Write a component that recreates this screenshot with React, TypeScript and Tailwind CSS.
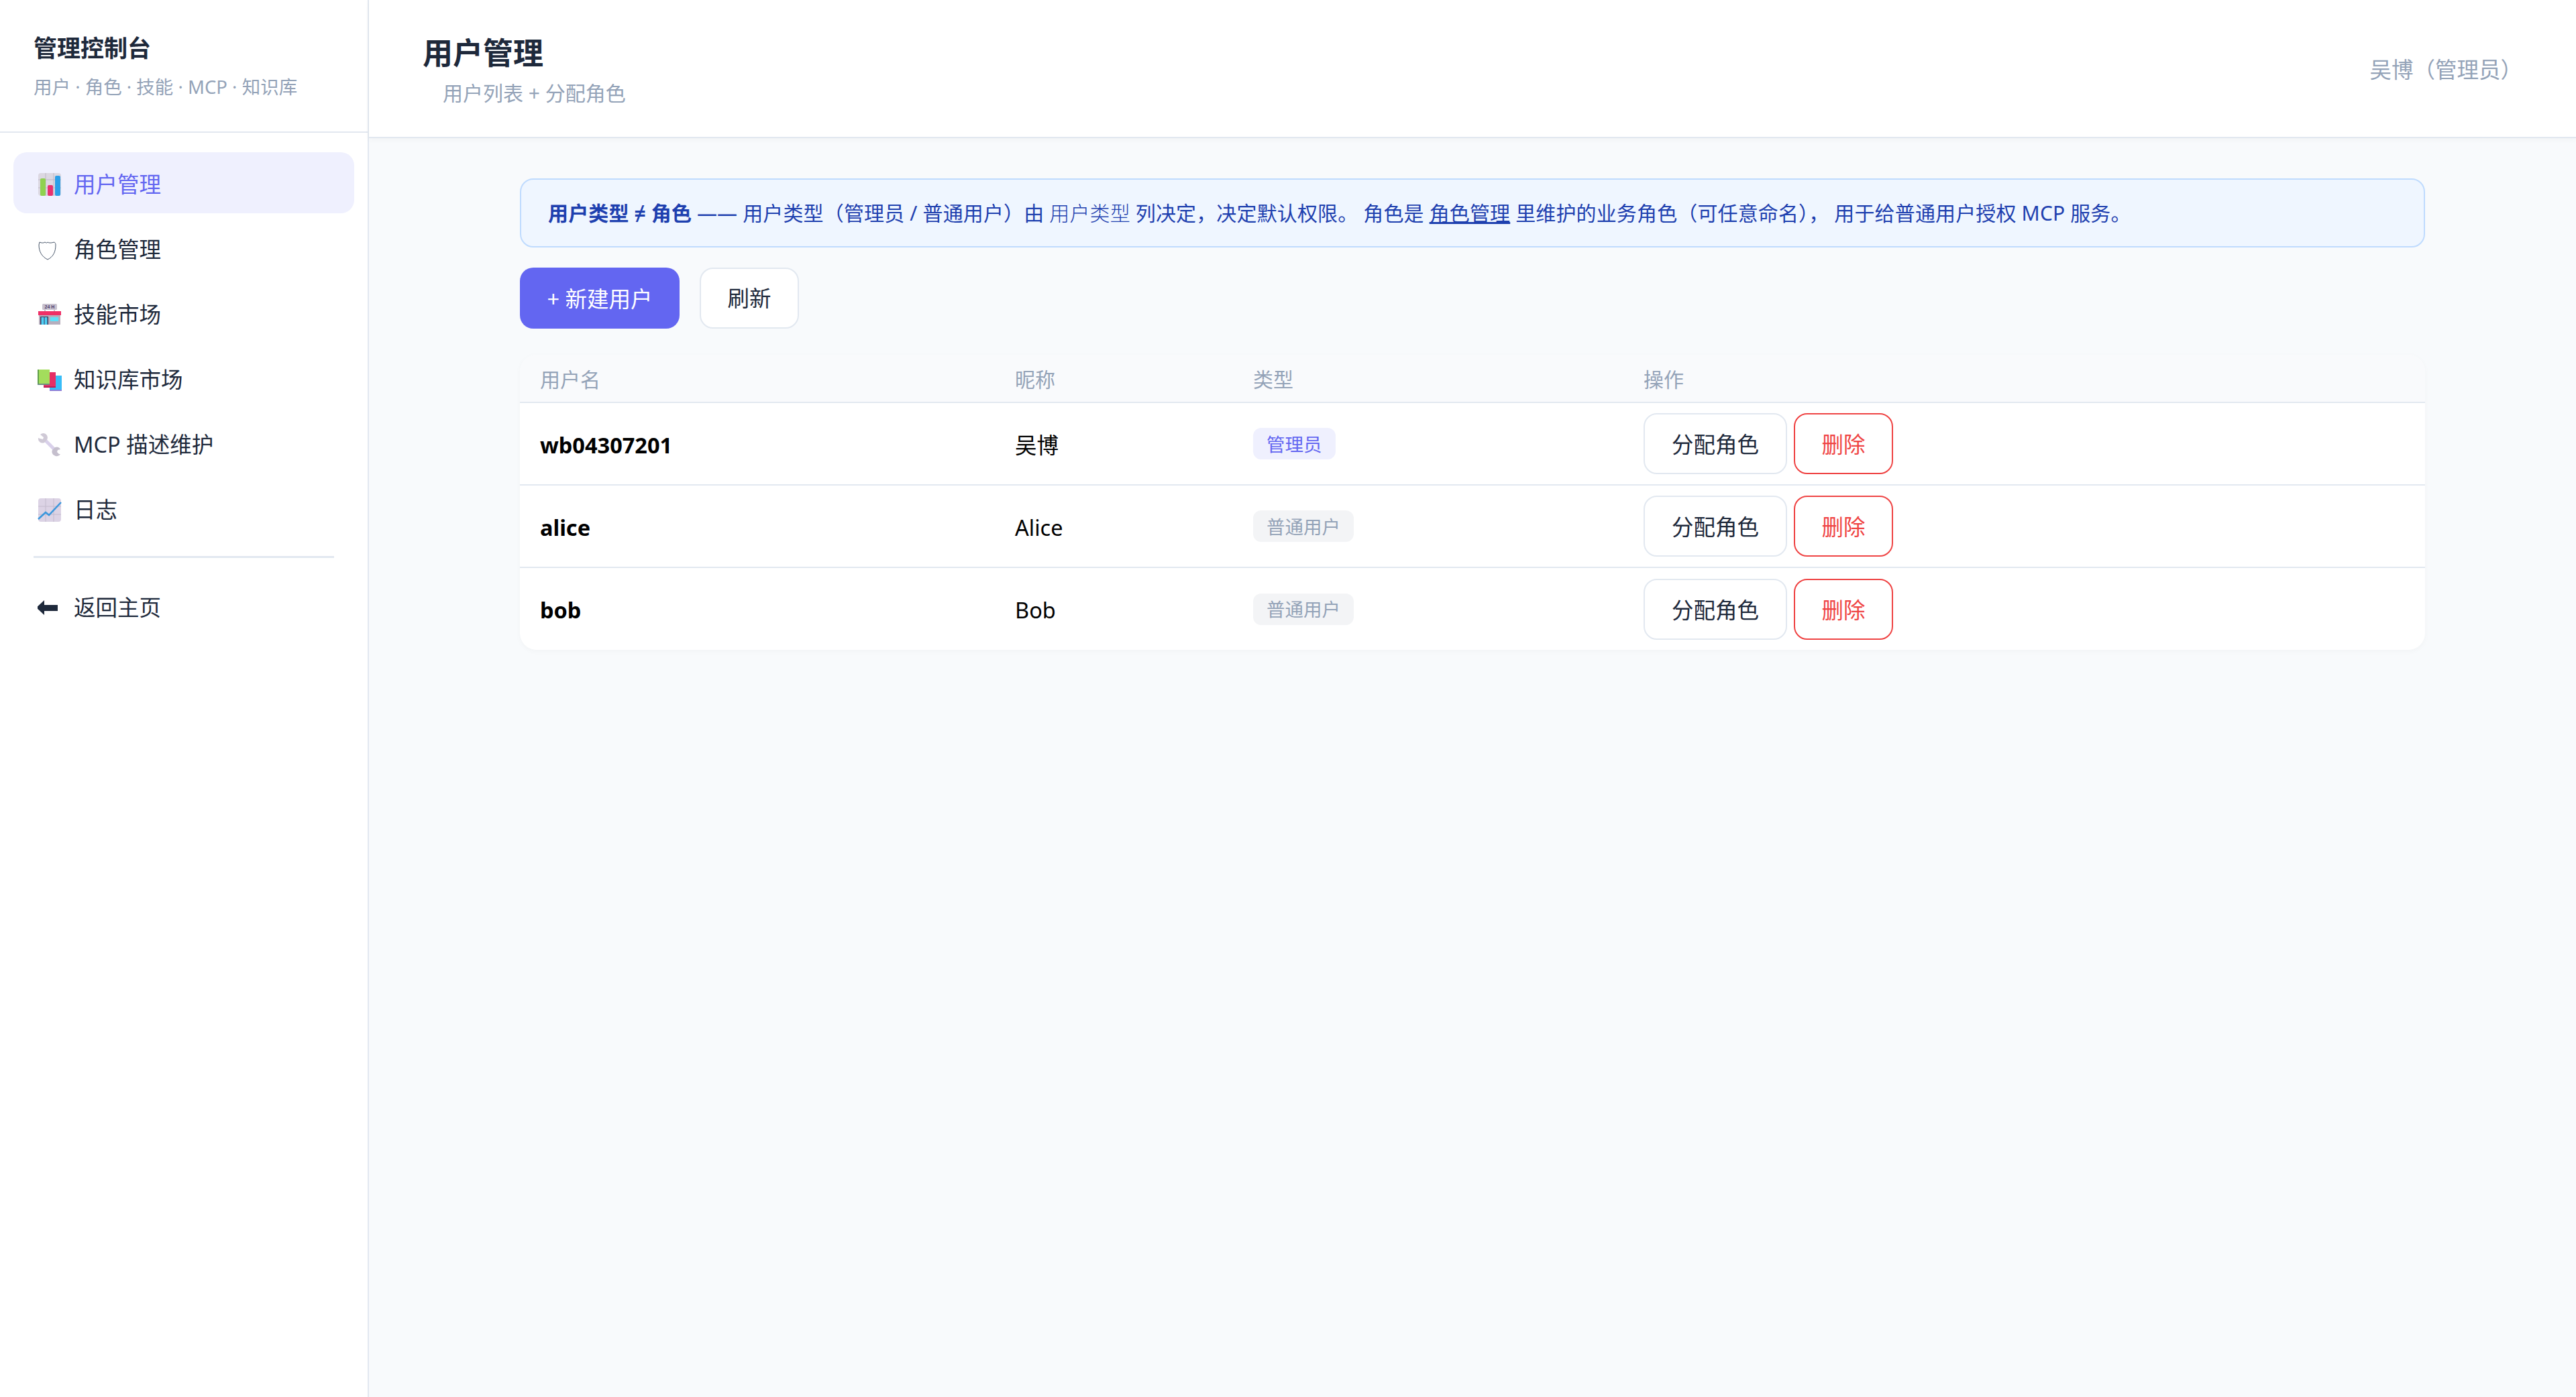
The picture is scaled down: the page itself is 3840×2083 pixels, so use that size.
const navIcon = "block h-[36px] w-[36px] shrink-0";

function BarIcon() {
  return (
    <svg viewBox="0 0 36 36" className={navIcon}>
      <rect x="1" y="1" width="34" height="34" rx="4" fill="#dcd8e2" />
      <path d="M1 11h34M1 23h34M12 1v34M24 1v34" stroke="#bdb8c6" strokeWidth="1" />
      <rect x="4" y="9" width="8" height="26" rx="2" fill="#8fd14f" />
      <rect x="15" y="19" width="8" height="16" rx="2" fill="#e8316f" />
      <rect x="26" y="5" width="8" height="30" rx="2" fill="#2a9fe8" />
    </svg>
  );
}

function ShieldIcon() {
  return (
    <svg viewBox="0 0 36 36" className={navIcon}>
      <path
        d="M3 6c3 1.500 6 1.500 8 0 2 1.500 3 1.500 4 0 2 1.500 5 1.500 10 0 1 1 2 2 2 4 0 11-4 18-12 22C7 28 2 21 2 10z"
        fill="none"
        stroke="#475569"
        strokeWidth="1"
        transform="translate(0 1)"
      />
    </svg>
  );
}

function StoreIcon() {
  return (
    <svg viewBox="0 0 36 36" className={navIcon}>
      <rect x="7" y="2" width="22" height="9" rx="1.500" fill="#c8c2cf" />
      <text x="18" y="9" textAnchor="middle" fontSize="7" fontWeight="700" fill="#4b3b6b" fontFamily="Liberation Sans, sans-serif">
        24 H
      </text>
      <path d="M11 11v2M25 11v2" stroke="#8d8597" strokeWidth="1" />
      <rect x="1" y="13" width="34" height="6" fill="#ef2f66" />
      <rect x="2" y="19" width="32" height="14" fill="#b6aebd" />
      <rect x="4" y="21" width="12" height="12" fill="#3b3357" />
      <rect x="5.500" y="22" width="4" height="11" fill="#4fd0f5" />
      <rect x="10.500" y="22" width="4" height="11" fill="#4fd0f5" />
      <rect x="19" y="22" width="12" height="6" fill="#5fe0fb" />
    </svg>
  );
}

function BooksIcon() {
  return (
    <svg viewBox="0 -3 36 36" className={navIcon}>
      <rect x="18" y="9" width="18" height="23" fill="#38bdf8" />
      <rect x="18" y="30" width="18" height="2" fill="#8b7fd6" />
      <rect x="9" y="4" width="18" height="23" fill="#e62e66" />
      <rect x="9" y="25" width="18" height="2" fill="#b81f55" />
      <rect x="0" y="0" width="18" height="23" fill="#a3dd5c" />
      <rect x="0" y="0" width="2" height="23" fill="#5f9e4a" />
      <rect x="0" y="21" width="18" height="2" fill="#6c8f80" />
    </svg>
  );
}

function WrenchIcon() {
  return (
    <svg viewBox="0 0 36 36" className={navIcon}>
      <path d="M9 9l19 19" stroke="#d9d0ea" strokeWidth="5" />
      <path d="M12 2a6.500 6.500 0 0 0-8 1l5 4-1 3-4-1-3-1a6.500 6.500 0 0 0 9 7l3-3a6.500 6.500 0 0 0-1-10z" fill="#cfc9d6" />
      <path d="M26 22a6 6 0 0 1 8 3l-4 1-1 3 3 3 2 0a6 6 0 0 1-9 2 6 6 0 0 1-3-8z" fill="#c5bfcd" />
    </svg>
  );
}

function LineIcon() {
  return (
    <svg viewBox="0 -1 36 36" className={navIcon}>
      <rect x="1" y="0" width="34" height="35" rx="4" fill="#dcd3e5" />
      <path d="M1 12h34M1 24h34M12 0v35M24 0v35" stroke="#c3bacd" strokeWidth="1" />
      <path d="M1 31l11-10 5 4L35 6" fill="none" stroke="#3a97dc" strokeWidth="2.500" />
    </svg>
  );
}

function BackIcon() {
  return (
    <svg viewBox="2 0 36 36" className={navIcon}>
      <path d="M0 18L12 7v7h20v9H12v6z" fill="#1e293b" />
    </svg>
  );
}

const navItems = [
  { label: "用户管理", icon: <BarIcon />, active: true },
  { label: "角色管理", icon: <ShieldIcon /> },
  { label: "技能市场", icon: <StoreIcon /> },
  { label: "知识库市场", icon: <BooksIcon /> },
  { label: "MCP 描述维护", icon: <WrenchIcon /> },
  { label: "日志", icon: <LineIcon /> },
];

function NavItem({ label, icon, active }: { label: string; icon: React.ReactNode; active?: boolean }) {
  return (
    <div
      className={`flex h-[91px] items-center gap-[18px] rounded-[20px] pl-[36px] pt-[5px] text-[32.5px] ${
        active ? "bg-[#eff0fe] text-[#6366f1]" : "text-[#1e293b]"
      }`}
    >
      {icon}
      <span>{label}</span>
    </div>
  );
}

const users = [
  { name: "wb04307201", nick: "吴博", type: "管理员", admin: true },
  { name: "alice", nick: "Alice", type: "普通用户" },
  { name: "bob", nick: "Bob", type: "普通用户" },
];

export default function App() {
  return (
    <div className="flex min-h-[2083px] bg-[#f8fafc] font-['Noto_Sans','Noto_Sans_CJK_SC',sans-serif] text-black">
      {/* 侧边栏 */}
      <aside className="w-[550px] shrink-0 border-r-2 border-[#e2e8f0] bg-white">
        <div className="h-[198px] border-b-2 border-[#e2e8f0] pl-[50px] pt-[49px]">
          <div className="text-[35px] font-bold leading-[46px] text-[#1e293b]">管理控制台</div>
          <div className="mt-[15px] text-[27.5px] leading-[40px] text-[#94a3b8]">用户 · 角色 · 技能 · MCP · 知识库</div>
        </div>
        <nav className="flex flex-col gap-[6px] px-[20px] pt-[29px]">
          {navItems.map((it) => (
            <NavItem key={it.label} {...it} />
          ))}
          <div className="mx-[30px] my-[20px] h-[3px] bg-[#e2e8f0]" />
          <NavItem label="返回主页" icon={<BackIcon />} />
        </nav>
      </aside>

      <div className="flex min-w-0 flex-1 flex-col">
        {/* 顶栏 */}
        <header className="flex h-[206px] items-center justify-between border-b-2 border-[#e2e8f0] bg-white px-[80px] shadow-[0_2px_8px_rgba(0,0,0,0.04)]">
          <div className="pt-[7px]">
            <div className="text-[45px] font-bold leading-[58px] text-[#1e293b]">用户管理</div>
            <div className="ml-[30px] mt-[9px] text-[30px] leading-[44px] text-[#94a3b8]">用户列表 + 分配角色</div>
          </div>
          <div className="pt-[4px] text-[32.5px] text-[#94a3b8]">吴博（管理员）</div>
        </header>

        <main className="mx-auto w-[2840px] pt-[60px]">
          <div className="flex h-[103px] items-center rounded-[20px] border-2 border-[#bfdbfe] bg-[#eff6ff] px-[40px] text-[30px] tracking-[0.14px] text-[#1e40af]">
            <p>
              <b className="font-bold">用户类型 ≠ 角色</b> —— 用户类型（管理员 / 普通用户）由{" "}
              <span className="font-light">用户类型</span> 列决定，决定默认权限。 角色是{" "}
              <span className="underline">角色管理</span> 里维护的业务角色（可任意命名）， 用于给普通用户授权 MCP 服务。
            </p>
          </div>

          <div className="mt-[30px] flex gap-[30px]">
            <button className="h-[91px] w-[238px] rounded-[20px] bg-[#6366f1] pt-[4px] text-[32.5px] text-white">+ 新建用户</button>
            <button className="h-[91px] w-[148px] rounded-[20px] border-2 border-[#e2e8f0] bg-white pt-[2px] text-[32.5px] text-[#1e293b]">刷新</button>
          </div>

          <div className="mt-[39px] overflow-hidden rounded-[25px] bg-white shadow-[0_2px_8px_rgba(0,0,0,0.03)]">
            <table className="w-full table-fixed border-collapse text-left">
              <thead>
                <tr className="h-[71px] border-b-2 border-[#e2e8f0] bg-[#f9fafc] text-[30px] text-[#94a3b8]">
                  <th className="w-[708px] pl-[30px] pt-[2px] font-normal">用户名</th>
                  <th className="w-[355px] pl-[30px] pt-[2px] font-normal">昵称</th>
                  <th className="w-[582px] pl-[30px] pt-[2px] font-normal">类型</th>
                  <th className="pl-[30px] pt-[2px] font-normal">操作</th>
                </tr>
              </thead>
              <tbody>
                {users.map((u, i) => (
                  <tr key={u.name} className={`h-[123px] text-[32.5px] ${i < users.length - 1 ? "border-b-2 border-[#e2e8f0]" : ""}`}>
                    <td className="pl-[30px] pt-[5px] font-bold">{u.name}</td>
                    <td className="pl-[30px] pt-[5px]">{u.nick}</td>
                    <td className="pl-[30px]">
                      <span
                        className={`flex h-[47px] w-fit items-center rounded-[12px] px-[20px] pt-[2px] text-[27.5px] ${
                          u.admin ? "bg-[#eff0fe] text-[#6366f1]" : "bg-[#f3f4f6] text-[#94a3b8]"
                        }`}
                      >
                        {u.type}
                      </span>
                    </td>
                    <td className="pl-[30px]">
                      <div className="flex gap-[10px]">
                        <button className="h-[91px] w-[214px] rounded-[20px] border-2 border-[#e2e8f0] bg-white pt-[4px] text-[#1e293b]">分配角色</button>
                        <button className="h-[91px] w-[148px] rounded-[20px] border-2 border-[#ef4444] bg-white pt-[4px] text-[#ef4444]">删除</button>
                      </div>
                    </td>
                  </tr>
                ))}
              </tbody>
            </table>
          </div>
        </main>
      </div>
    </div>
  );
}
